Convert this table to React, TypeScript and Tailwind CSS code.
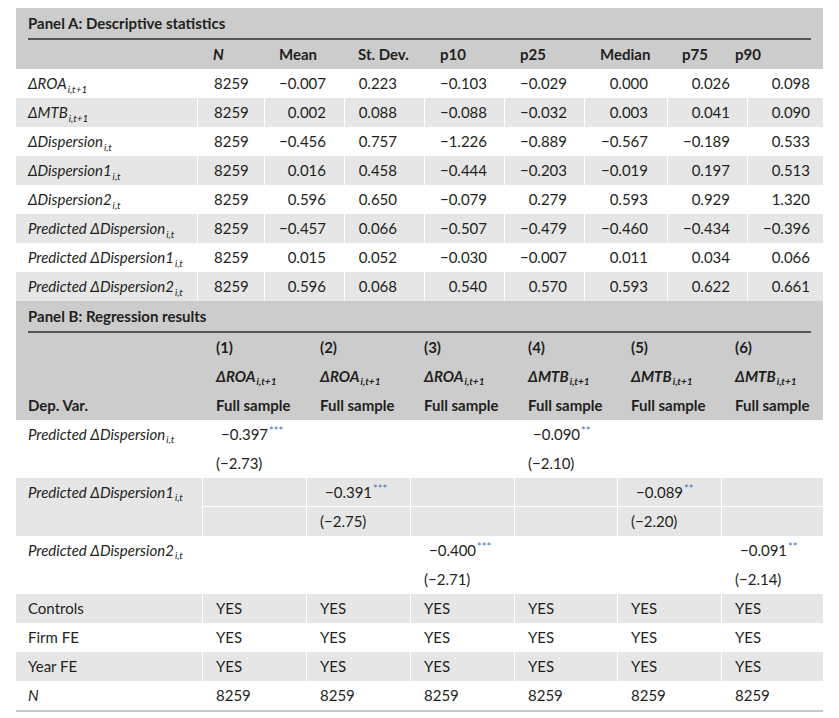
import React from 'react'

const MINUS = '\u2212'

const Sub = ({ children }: { children: React.ReactNode }) => (
  <sub className="text-[10px] bottom-[-4px] ml-[1px]">{children}</sub>
)

const Stars = ({ n }: { n: number }) => (
  <sup className="text-[11px] text-[#3f74c6] top-[-5px] ml-[1px]">{'*'.repeat(n)}</sup>
)

// panel A column cells: [header class, value class]
const aCols = [
  { h: 'pl-[16px]', v: 'pl-[16px] text-left' },
  { h: 'pl-[15px]', v: 'pr-[18px] text-right' },
  { h: 'pl-[14px]', v: 'pr-[27px] text-right' },
  { h: 'pl-[16px]', v: 'pr-[17px] text-right' },
  { h: 'pl-[16px]', v: 'pr-[17px] text-right' },
  { h: 'pl-[16px]', v: 'pr-[19px] text-right' },
  { h: 'pl-[15px]', v: 'pr-[17px] text-right' },
  { h: 'ml-[-12px]', v: 'pr-[13px] text-right' },
]

const aHeaders: React.ReactNode[] = [
  <i key="n">N</i>,
  'Mean',
  'St. Dev.',
  'p10',
  'p25',
  'Median',
  'p75',
  'p90',
]

const aRows: { label: React.ReactNode; vals: string[] }[] = [
  {
    label: <i>ΔROA<Sub>i,t+1</Sub></i>,
    vals: ['8259', '-0.007', '0.223', '-0.103', '-0.029', '0.000', '0.026', '0.098'],
  },
  {
    label: <i>ΔMTB<Sub>i,t+1</Sub></i>,
    vals: ['8259', '0.002', '0.088', '-0.088', '-0.032', '0.003', '0.041', '0.090'],
  },
  {
    label: <i>ΔDispersion<Sub>i,t</Sub></i>,
    vals: ['8259', '-0.456', '0.757', '-1.226', '-0.889', '-0.567', '-0.189', '0.533'],
  },
  {
    label: <i>ΔDispersion1<Sub>i,t</Sub></i>,
    vals: ['8259', '0.016', '0.458', '-0.444', '-0.203', '-0.019', '0.197', '0.513'],
  },
  {
    label: <i>ΔDispersion2<Sub>i,t</Sub></i>,
    vals: ['8259', '0.596', '0.650', '-0.079', '0.279', '0.593', '0.929', '1.320'],
  },
  {
    label: <i>Predicted ΔDispersion<Sub>i,t</Sub></i>,
    vals: ['8259', '-0.457', '0.066', '-0.507', '-0.479', '-0.460', '-0.434', '-0.396'],
  },
  {
    label: <i>Predicted ΔDispersion1<Sub>i,t</Sub></i>,
    vals: ['8259', '0.015', '0.052', '-0.030', '-0.007', '0.011', '0.034', '0.066'],
  },
  {
    label: <i>Predicted ΔDispersion2<Sub>i,t</Sub></i>,
    vals: ['8259', '0.596', '0.068', '0.540', '0.570', '0.593', '0.622', '0.661'],
  },
]

const fmt = (s: string) => s.replace('-', MINUS)

const bHeads = [
  <>ΔROA<Sub>i,t+1</Sub></>,
  <>ΔROA<Sub>i,t+1</Sub></>,
  <>ΔROA<Sub>i,t+1</Sub></>,
  <>ΔMTB<Sub>i,t+1</Sub></>,
  <>ΔMTB<Sub>i,t+1</Sub></>,
  <>ΔMTB<Sub>i,t+1</Sub></>,
]

const regRows = [
  { label: <>Predicted ΔDispersion<Sub>i,t</Sub></>, cells: { 0: ['-0.397', 3, '(-2.73)'], 3: ['-0.090', 2, '(-2.10)'] } },
  { label: <>Predicted ΔDispersion1<Sub>i,t</Sub></>, cells: { 1: ['-0.391', 3, '(-2.75)'], 4: ['-0.089', 2, '(-2.20)'] } },
  { label: <>Predicted ΔDispersion2<Sub>i,t</Sub></>, cells: { 2: ['-0.400', 3, '(-2.71)'], 5: ['-0.091', 2, '(-2.14)'] } },
] as { label: React.ReactNode; cells: Record<number, [string, number, string]> }[]

const ctrlRows: { label: React.ReactNode; val: string }[] = [
  { label: 'Controls', val: 'YES' },
  { label: 'Firm FE', val: 'YES' },
  { label: 'Year FE', val: 'YES' },
  { label: <i>N</i>, val: '8259' },
]

const gridA = 'grid grid-cols-[181px_67px_80px_80px_80px_80px_83px_80px_76px] h-[29px] items-stretch'
const gridB = 'grid grid-cols-[186px_104px_104px_104px_103px_104px_102px]'

export default function App() {
  return (
    <div className="min-h-screen bg-white pl-4 pt-2 font-['Lato','Noto_Sans',sans-serif] text-[15px] leading-none text-[#231f20]">
      <div className="w-[807px]">
        {/* Panel A */}
        <div className="bg-[#cccccc]">
          <div className="mx-3 flex h-[32px] items-center border-b-2 border-[#555555] font-bold">
            Panel A: Descriptive statistics
          </div>
          <div className={`${gridA} font-bold`}>
            <div />
            {aHeaders.map((h, i) => (
              <div key={i} className="flex items-center">
                <span className={aCols[i].h}>{h}</span>
              </div>
            ))}
          </div>
        </div>
        {aRows.map((r, ri) => (
          <div key={ri} className={`${gridA} ${ri % 2 ? 'bg-[#e6e6e6]' : 'bg-white'}`}>
            <div className="flex items-center pl-3">{r.label}</div>
            {r.vals.map((v, i) => (
              <div key={i} className={`flex items-center border-l border-white ${aCols[i].v.includes('text-right') ? 'justify-end' : ''}`}>
                <span className={aCols[i].v}>{fmt(v)}</span>
              </div>
            ))}
          </div>
        ))}

        {/* Panel B */}
        <div className="bg-[#cccccc] font-bold">
          <div className="mx-3 flex h-[32px] items-center border-b-2 border-[#555555]">
            Panel B: Regression results
          </div>
          <div className={gridB}>
            <div className="flex flex-col">
              <div className="h-[29px]" />
              <div className="h-[29px]" />
              <div className="flex h-[29px] items-center pl-3">Dep. Var.</div>
            </div>
            {bHeads.map((h, i) => (
              <div key={i} className="flex flex-col pl-[14px]">
                <div className="flex h-[29px] items-center">({i + 1})</div>
                <div className="flex h-[29px] items-center italic">{h}</div>
                <div className="flex h-[29px] items-center">Full sample</div>
              </div>
            ))}
          </div>
        </div>
        {regRows.map((r, ri) => (
          <div key={ri} className={`${gridB} ${ri % 2 ? 'bg-[#e6e6e6]' : 'bg-white'}`}>
            <div className="flex h-[58px] items-start pl-3">
              <div className="flex h-[29px] items-center italic">{r.label}</div>
            </div>
            {[0, 1, 2, 3, 4, 5].map((c) => {
              const cell = r.cells[c]
              return (
                <div key={c} className="flex flex-col border-l border-white">
                  <div className="flex h-[29px] items-center border-b border-white pl-[18px]">
                    {cell && (
                      <span>
                        {fmt(cell[0])}
                        <Stars n={cell[1]} />
                      </span>
                    )}
                  </div>
                  <div className="flex h-[28px] items-center pl-[13px]">{cell && fmt(cell[2])}</div>
                </div>
              )
            })}
          </div>
        ))}
        {ctrlRows.map((r, ri) => (
          <div key={ri} className={`${gridB} h-[29px] ${ri % 2 ? 'bg-white' : 'bg-[#e6e6e6]'}`}>
            <div className="flex items-center pl-3">{r.label}</div>
            {[0, 1, 2, 3, 4, 5].map((c) => (
              <div key={c} className="flex items-center border-l border-white pl-[13px]">
                {r.val}
              </div>
            ))}
          </div>
        ))}
        <div className="h-[2px] bg-[#c8c8c8]" />
      </div>
    </div>
  )
}
